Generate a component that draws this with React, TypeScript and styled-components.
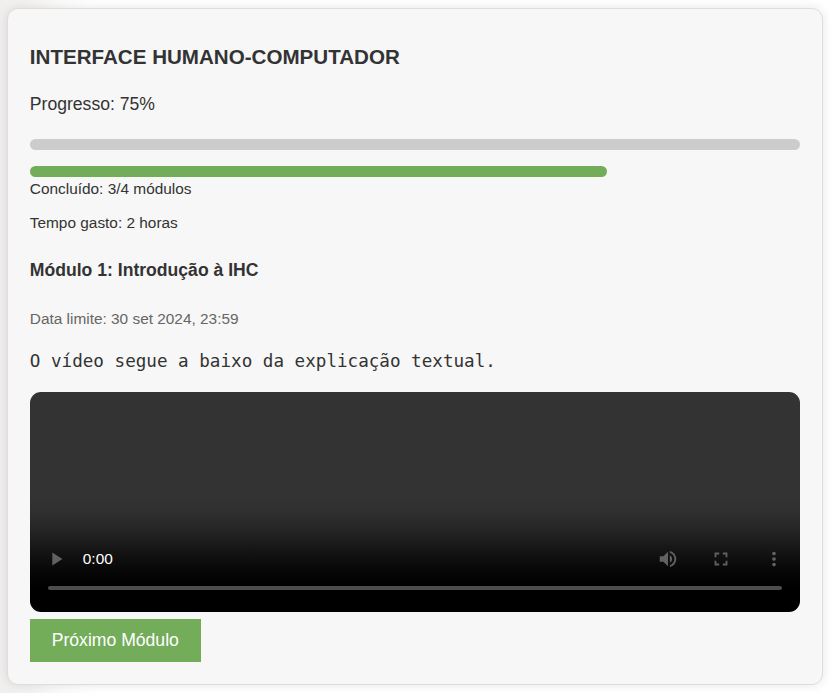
import React from "react";
import styled, { createGlobalStyle } from "styled-components";

const GlobalStyle = createGlobalStyle`
  * { box-sizing: border-box; }
  html, body { margin: 0; height: 100%; }
  body {
    background: #fff linear-gradient(90deg, #f1efed 0, #f4f2f1 28px, #fbfbfa 62px, #fff 92px);
    font-family: "Liberation Sans", Arial, sans-serif;
    color: #333;
    overflow: hidden;
  }
`;

const Card = styled.main`
  width: 816px;
  height: 677px;
  margin: 8px 0 0 6.8px;
  padding: 22px;
  border: 1px solid #ddd;
  border-radius: 11px;
  background: #f7f7f7;
  box-shadow: 0 0 11px rgba(0, 0, 0, 0.1);
  display: flex;
  flex-direction: column;
  align-items: flex-start;
`;

const Title = styled.h3`
  margin: 14px 0 0;
  font-size: 20.59px;
  line-height: 24px;
`;

const Progress = styled.p`
  margin: 25px 0 0;
  font-size: 17.6px;
  line-height: 20px;
`;

const Bar = styled.div<{ $color: string; $percent: number; $gap: number }>`
  width: ${(p) => p.$percent}%;
  height: 11px;
  margin-top: ${(p) => p.$gap}px;
  border-radius: 5.5px;
  background: ${(p) => p.$color};
`;

const Detail = styled.p<{ $gap: number; $muted?: boolean }>`
  margin: ${(p) => p.$gap}px 0 0;
  font-size: 15.4px;
  line-height: 18px;
  color: ${(p) => (p.$muted ? "#666" : "#333")};
`;

const ModuleTitle = styled.h4`
  margin: 28px 0 0;
  font-size: 17.6px;
  line-height: 20px;
`;

const Explanation = styled.pre`
  margin: 23px 0 0;
  font-family: "DejaVu Sans Mono", monospace;
  font-size: 17.6px;
  line-height: 21px;
`;

const Player = styled.section`
  width: 770px;
  height: 220px;
  margin-top: 20px;
  padding: 0 18px 22px;
  border-radius: 11px;
  background: linear-gradient(#333 0, #333 104px, #303030 118px, #262626 136px, #151515 158px, #060606 180px, #000 196px);
  display: flex;
  flex-direction: column;
  justify-content: flex-end;
`;

const Controls = styled.div`
  height: 22px;
  margin: 0 -3px 16px;
  display: flex;
  align-items: center;
  color: #fff;
`;

const Time = styled.span`
  margin-left: 16px;
  margin-right: auto;
  font-size: 15.4px;
  line-height: 18px;
`;

const IconButton = styled.button<{ $gap?: number }>`
  width: 22px;
  height: 22px;
  margin: 0 0 0 ${(p) => p.$gap || 0}px;
  padding: 0;
  border: 0;
  background: none;
  color: #616161;
  svg { display: block; width: 22px; height: 22px; fill: currentColor; }
`;

const Timeline = styled.div`
  height: 4px;
  border-radius: 2px;
  background: #4d4d4d;
`;

const NextButton = styled.button`
  width: 171px;
  height: 43px;
  margin-top: 7px;
  padding: 0 0 2px;
  border: 0;
  background: #73ad5a;
  color: #fff;
  font: 17.6px/20px "Liberation Sans", Arial, sans-serif;
`;

const Icon = ({ d }: { d: string }) => (
  <svg viewBox="0 0 24 24" aria-hidden="true"><path d={d} /></svg>
);

export default function App() {
  return (
    <>
      <GlobalStyle />
      <Card>
        <Title>INTERFACE HUMANO-COMPUTADOR</Title>
        <Progress>Progresso: 75%</Progress>
        <Bar $color="#ccc" $percent={100} $gap={25} />
        <Bar $color="#73ad5a" $percent={75} $gap={16} />
        <Detail $gap={3}>Concluído: 3/4 módulos</Detail>
        <Detail $gap={16}>Tempo gasto: 2 horas</Detail>
        <ModuleTitle>Módulo 1: Introdução à IHC</ModuleTitle>
        <Detail $gap={30} $muted>Data limite: 30 set 2024, 23:59</Detail>
        <Explanation>O vídeo segue a baixo da explicação textual.</Explanation>
        <Player>
          <Controls>
            <IconButton aria-label="Reproduzir"><Icon d="M8 5v14l11-7z" /></IconButton>
            <Time>0:00</Time>
            <IconButton aria-label="Volume"><Icon d="M3 9v6h4l5 5V4L7 9H3zm13.5 3c0-1.77-1.02-3.29-2.5-4.03v8.05c1.48-.73 2.5-2.25 2.5-4.02zM14 3.23v2.06c2.89.86 5 3.54 5 6.71s-2.11 5.85-5 6.71v2.06c4.01-.91 7-4.49 7-8.77s-2.99-7.86-7-8.77z" /></IconButton>
            <IconButton aria-label="Tela cheia" $gap={31}><Icon d="M7 14H5v5h5v-2H7v-3zm-2-4h2V7h3V5H5v5zm12 7h-3v2h5v-5h-2v3zM14 5v2h3v3h2V5h-5z" /></IconButton>
            <IconButton aria-label="Mais opções" $gap={31}><Icon d="M12 8c1.1 0 2-.9 2-2s-.9-2-2-2-2 .9-2 2 .9 2 2 2zm0 2c-1.1 0-2 .9-2 2s.9 2 2 2 2-.9 2-2-.9-2-2-2zm0 6c-1.1 0-2 .9-2 2s.9 2 2 2 2-.9 2-2-.9-2-2-2z" /></IconButton>
          </Controls>
          <Timeline />
        </Player>
        <NextButton>Próximo Módulo</NextButton>
      </Card>
    </>
  );
}
